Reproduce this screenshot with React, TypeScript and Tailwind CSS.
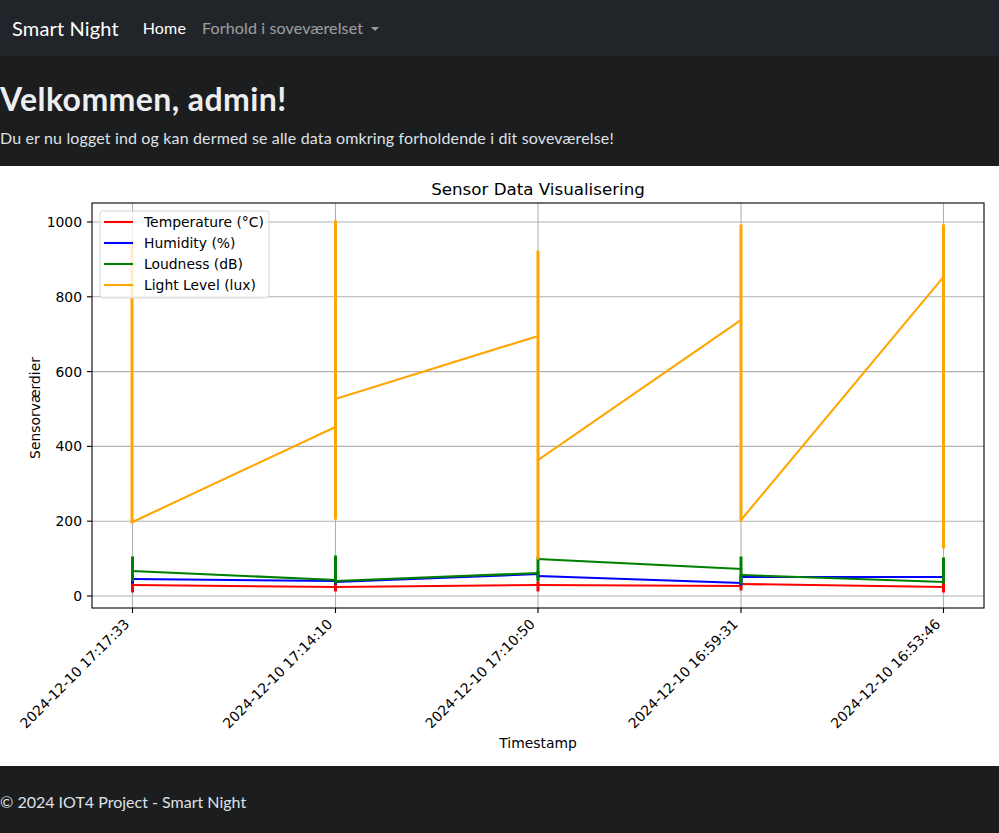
const ui = "font-['Lato',sans-serif]";

// x positions of the five timestamps and the value->pixel map of the plot
const xs = [132.5, 335.5, 538, 741, 943.5];
const stamps = [
  "2024-12-10 17:17:33",
  "2024-12-10 17:14:10",
  "2024-12-10 17:10:50",
  "2024-12-10 16:59:31",
  "2024-12-10 16:53:46",
];
const yTicks = [0, 200, 400, 600, 800, 1000];
const yPx = (v: number) => 596 - v * 0.374;

type Seg = [number, number, number, number];

// each series: vertical bursts at one timestamp, then the jump to the next one
const series: { color: string; bursts: Seg[]; links: Seg[] }[] = [
  {
    color: "#ff0000",
    bursts: [
      [132.5, 580, 132.5, 591],
      [335.5, 582, 335.5, 590],
      [538, 583, 538, 590],
      [741, 582, 741, 589],
      [943.5, 583, 943.5, 591],
    ],
    links: [
      [132.5, 585, 335.5, 587],
      [335.5, 587, 538, 585],
      [538, 585, 741, 586],
      [741, 584, 943.5, 587],
    ],
  },
  {
    color: "#0000ff",
    bursts: [
      [132.5, 577, 132.5, 582],
      [335.5, 579, 335.5, 583],
      [538, 573, 538, 577],
      [741, 576, 741, 584],
      [943.5, 576, 943.5, 579],
    ],
    links: [
      [132.5, 579, 335.5, 581],
      [335.5, 582, 538, 574],
      [538, 576, 741, 583],
      [741, 577, 943.5, 577],
    ],
  },
  {
    color: "#008000",
    bursts: [
      [132.5, 558, 132.5, 580],
      [335.5, 557, 335.5, 582],
      [538, 558, 538, 580],
      [741, 558, 741, 583],
      [943.5, 559, 943.5, 582],
    ],
    links: [
      [132.5, 571, 335.5, 580],
      [335.5, 581, 538, 573],
      [538, 559, 741, 569],
      [741, 575, 943.5, 582],
    ],
  },
  {
    color: "#ffa500",
    bursts: [
      [132, 242, 132, 522],
      [335.5, 222, 335.5, 518],
      [538, 252, 538, 558],
      [741, 226, 741, 520],
      [943.5, 226, 943.5, 547],
    ],
    links: [
      [132.5, 522, 335.5, 427],
      [335.5, 399, 538, 336],
      [538, 460, 741, 320],
      [741, 520, 943.5, 277],
    ],
  },
];

const legend = [
  { color: "#ff0000", label: "Temperature (°C)" },
  { color: "#0000ff", label: "Humidity (%)" },
  { color: "#008000", label: "Loudness (dB)" },
  { color: "#ffa500", label: "Light Level (lux)" },
];

function SensorChart() {
  return (
    <svg
      width="999"
      height="600"
      viewBox="0 166 999 600"
      className="block"
      fontFamily="'DejaVu Sans', sans-serif"
    >
      <rect x="0" y="166" width="999" height="600" fill="#ffffff" />

      {/* grid */}
      {yTicks.map((t) => (
        <line key={t} x1="92" x2="984" y1={yPx(t)} y2={yPx(t)} stroke="#b0b0b0" strokeWidth="1.1" />
      ))}
      {xs.map((x) => (
        <line key={x} x1={x} x2={x} y1="203" y2="608" stroke="#b0b0b0" strokeWidth="1.1" />
      ))}

      {/* data */}
      {series.map((s) => (
        <g key={s.color} stroke={s.color} strokeLinecap="square" fill="none">
          {s.links.map((l, i) => (
            <line key={"l" + i} x1={l[0]} y1={l[1]} x2={l[2]} y2={l[3]} strokeWidth="2.1" />
          ))}
          {s.bursts.map((b, i) => (
            <line key={"b" + i} x1={b[0]} y1={b[1]} x2={b[2]} y2={b[3]} strokeWidth="3" />
          ))}
        </g>
      ))}

      {/* axes frame and ticks */}
      <rect x="92" y="203" width="892" height="405" fill="none" stroke="#000" strokeWidth="1.1" />
      {yTicks.map((t) => (
        <g key={t}>
          <line x1="87" x2="92" y1={yPx(t)} y2={yPx(t)} stroke="#000" strokeWidth="1.1" />
          <text x="82" y={yPx(t) + 5} textAnchor="end" fontSize="13.9" fill="#000">
            {t}
          </text>
        </g>
      ))}
      {xs.map((x, i) => (
        <g key={x}>
          <line x1={x} x2={x} y1="608" y2="613" stroke="#000" strokeWidth="1.1" />
          <text
            x={x - 2.3}
            y="625"
            textAnchor="end"
            fontSize="13.9"
            fill="#000"
            transform={`rotate(-45 ${x - 2.3} 625)`}
          >
            {stamps[i]}
          </text>
        </g>
      ))}

      {/* legend */}
      <rect x="100" y="211" width="169" height="87" rx="3" fill="#ffffff" fillOpacity="0.8" stroke="#cccccc" strokeOpacity="0.8" />
      {legend.map((l, i) => (
        <g key={l.label}>
          <line x1="104" x2="133" y1={222 + i * 21} y2={222 + i * 21} stroke={l.color} strokeWidth="2.1" />
          <text x="144" y={227 + i * 21} fontSize="13.9" fill="#000">
            {l.label}
          </text>
        </g>
      ))}

      {/* titles */}
      <text x="538" y="195" textAnchor="middle" fontSize="16.7" fill="#000">
        Sensor Data Visualisering
      </text>
      <text x="538" y="748" textAnchor="middle" fontSize="13.9" fill="#000">
        Timestamp
      </text>
      <text x="40" y="408" textAnchor="middle" fontSize="13.9" fill="#000" transform="rotate(-90 40 408)">
        Sensorværdier
      </text>
    </svg>
  );
}

export default function App() {
  return (
    <div className={`min-h-[833px] w-[999px] bg-[#1c1d1f] ${ui}`}>
      <nav className="flex h-14 items-center bg-[#212529] px-3 tracking-[0.15px]">
        <a className="mr-4 text-[20px] leading-[30px] text-white">Smart Night</a>
        <a className="px-2 text-[16px] leading-6 text-white">Home</a>
        <a className="flex items-center px-2 text-[16px] leading-6 text-white/55">
          Forhold i soveværelset
          <span className="ml-[8px] mt-[2px] h-0 w-0 border-x-[4.8px] border-t-[4.8px] border-x-transparent border-t-current" />
        </a>
      </nav>

      <header className="h-[110px] bg-[#1c1d1f] pt-6 text-[#dee2e6]">
        <h1 className="mb-2 text-[32px] font-bold leading-[38px] tracking-[0.4px] text-[#eceef0]">Velkommen, admin!</h1>
        <p className="text-[16px] leading-6 tracking-[0.15px]">
          Du er nu logget ind og kan dermed se alle data omkring forholdende i dit soveværelse!
        </p>
      </header>

      <main className="bg-white">
        <SensorChart />
      </main>

      <footer className="py-6 text-[16px] leading-6 text-[#dee2e6]">
        © 2024 IOT4 Project - Smart Night
      </footer>
    </div>
  );
}
